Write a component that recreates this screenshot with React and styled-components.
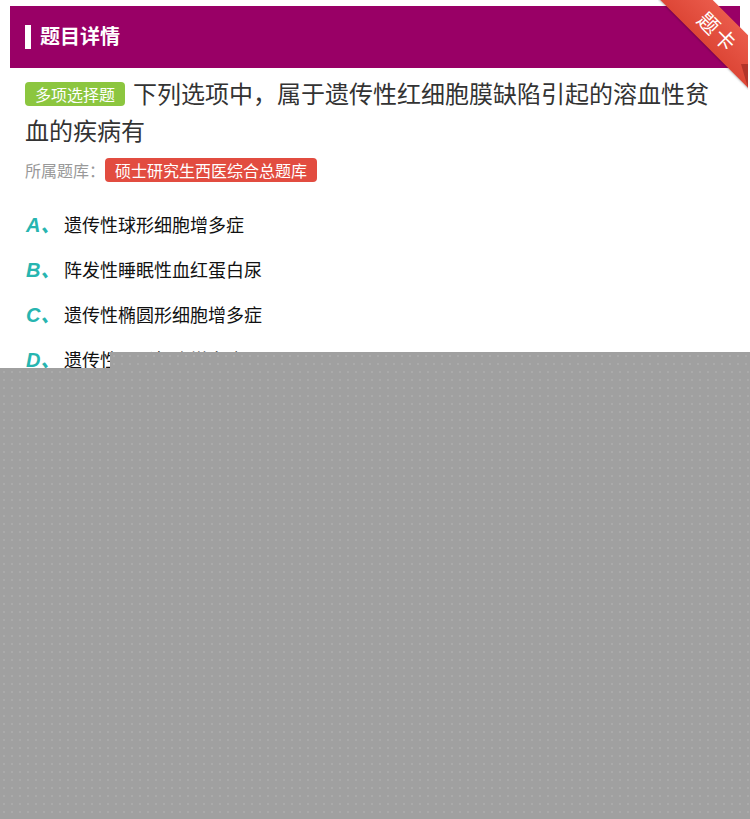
import React from "react";
import styled, { createGlobalStyle } from "styled-components";

const Global = createGlobalStyle`
  html, body { margin: 0; padding: 0; background: #fff; }
  body { font-family: "Noto Sans CJK SC", "Noto Sans", sans-serif; }
  * { box-sizing: border-box; }
`;

const Page = styled.div`
  position: relative;
  width: 750px;
  height: 819px;
  overflow: hidden;
  padding: 6px 10px 0;
`;

const Header = styled.div`
  height: 62px;
  background: #990066;
  display: flex;
  align-items: center;
  padding-left: 15px;
  gap: 9px;
`;

const HeaderBar = styled.span`
  width: 6px;
  height: 24px;
  background: #fff;
`;

const HeaderTitle = styled.h1`
  margin: 0 0 2px;
  font-size: 20px;
  font-weight: 700;
  color: #fff;
  line-height: 24px;
`;

const Ribbon = styled.div`
  position: absolute;
  top: 0;
  right: 2px;
  width: 90px;
  height: 90px;
  overflow: hidden;
  &::after {
    content: "";
    position: absolute;
    right: 0;
    top: 64px;
    width: 0;
    height: 0;
    border-left: 7px solid transparent;
    border-top: 24px solid #b3342a;
  }
`;

const RibbonBand = styled.div`
  position: absolute;
  left: -16px;
  top: 13px;
  width: 152px;
  height: 37px;
  transform: rotate(45deg);
  background: linear-gradient(#ea5b4b, #dd4636);
  color: #fff;
  font-size: 21px;
  line-height: 37px;
  text-align: center;
  letter-spacing: 2px;
  box-shadow: 0 1px 2px rgba(0,0,0,0.25);
`;

const Body = styled.div`
  padding: 6px 15px 0;
`;

const Question = styled.p`
  margin: 0;
  font-size: 24px;
  line-height: 37px;
  color: #333;
`;

const Tag = styled.span`
  display: inline-block;
  vertical-align: 2px;
  height: 24px;
  line-height: 24px;
  padding: 0 10px;
  margin-right: 8px;
  border-radius: 4px;
  font-size: 16px;
  color: #fff;
  background: ${(p) => p.$color};
`;

const BankRow = styled.div`
  margin-top: 10px;
  display: flex;
  align-items: center;
  font-size: 16px;
  color: #999;
  line-height: 24px;
`;

const BankTag = styled(Tag)`
  vertical-align: 0;
  margin: 0;
`;

const Options = styled.ul`
  list-style: none;
  margin: 19px 0 0;
  padding: 0;
`;

const Option = styled.li`
  display: flex;
  align-items: center;
  height: 45px;
`;

const Letter = styled.span`
  width: 39px;
  padding-left: 1px;
  font-family: "Liberation Sans", "Noto Sans CJK SC", sans-serif;
  font-weight: 700;
  font-style: italic;
  font-size: 20px;
  color: #27b5b0;
`;

const OptionText = styled.span`
  font-size: 18px;
  color: #111;
`;

const Mask = styled.div`
  position: absolute;
  z-index: 5;
  left: 0;
  right: 0;
  top: 368px;
  bottom: 0;
  background-color: #a0a0a0;
  background-image: radial-gradient(circle, #aaaaaa 0.8px, transparent 1.2px);
  background-size: 8px 8px;
  &::before {
    content: "";
    position: absolute;
    left: 110px;
    right: 0;
    top: -16px;
    height: 16px;
    background-color: #a0a0a0;
    background-image: radial-gradient(circle, #aaaaaa 0.8px, transparent 1.2px);
    background-size: 8px 8px;
  }
`;

const options = [
  ["A", "遗传性球形细胞增多症"],
  ["B", "阵发性睡眠性血红蛋白尿"],
  ["C", "遗传性椭圆形细胞增多症"],
  ["D", "遗传性口形细胞增多症"],
];

export default function App() {
  return (
    <>
      <Global />
      <Page>
        <Header>
          <HeaderBar />
          <HeaderTitle>题目详情</HeaderTitle>
        </Header>
        <Ribbon>
          <RibbonBand>题卡</RibbonBand>
        </Ribbon>
        <Body>
          <Question>
            <Tag $color="#8cc63f">多项选择题</Tag>
            下列选项中，属于遗传性红细胞膜缺陷引起的溶血性贫血的疾病有
          </Question>
          <BankRow>
            所属题库：
            <BankTag $color="#e24c40">硕士研究生西医综合总题库</BankTag>
          </BankRow>
          <Options>
            {options.map(([l, t]) => (
              <Option key={l}>
                <Letter>{l}、</Letter>
                <OptionText>{t}</OptionText>
              </Option>
            ))}
          </Options>
        </Body>
        <Mask />
      </Page>
    </>
  );
}
